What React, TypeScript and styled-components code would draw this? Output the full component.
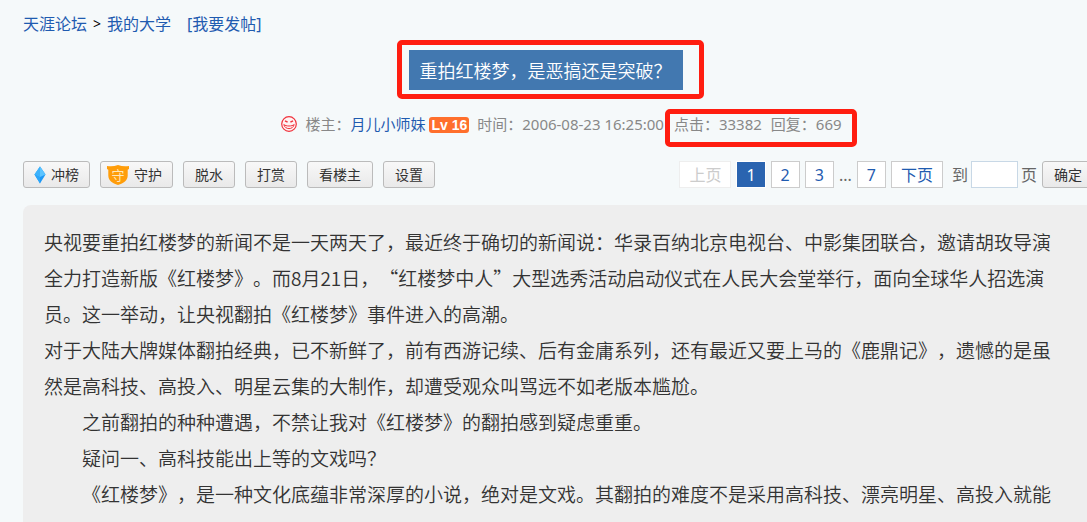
import React from "react";
import styled, { createGlobalStyle, css } from "styled-components";

const sans = `"Noto Sans", "Noto Sans CJK SC", sans-serif`;
const cjk = `"Noto Sans CJK SC", "Noto Sans", sans-serif`;

const GlobalStyle = createGlobalStyle`
  * { box-sizing: border-box; }
  body {
    margin: 0;
    background: #f5f9fa;
    color: #333;
    font-family: ${sans};
    overflow-x: hidden;
    text-spacing-trim: space-all;
  }
  button, input { font-family: inherit; margin: 0; }
`;

const Page = styled.main`
  margin: 0 -13px 0 23px;
  padding-top: 10px;
`;

const Link = styled.a`
  color: #1f5bb0;
  text-decoration: none;
`;

const Breadcrumb = styled.nav`
  display: flex;
  align-items: center;
  height: 26px;
  font-size: 16px;
  white-space: nowrap;
  color: #000;
`;

const Separator = styled.span`
  width: 20px;
  text-align: center;
  font-size: 14px;
`;

const PostLink = styled(Link)`
  margin-left: 16px;
`;

const TitleRow = styled.div`
  display: flex;
  justify-content: center;
  margin-top: 14px;
  padding-right: 32px;
`;

const TitleFrame = styled.div`
  position: relative;
`;

const Title = styled.h1`
  margin: 0;
  padding: 0 11px;
  background: #4278b0;
  color: #fff;
  font-family: ${cjk};
  font-size: 18px;
  font-weight: 350;
  line-height: 40px;
  white-space: nowrap;
`;

const Highlight = styled.span<{ $inset: string }>`
  position: absolute;
  inset: ${(p) => p.$inset};
  border: 5px solid #ff1d10;
  border-radius: 5px;
  pointer-events: none;
`;

const Meta = styled.div`
  display: flex;
  justify-content: center;
  align-items: baseline;
  margin-top: 20px;
  font-size: 15px;
  line-height: 28px;
  color: #888;
  white-space: nowrap;
`;

const Smile = styled.svg`
  align-self: center;
  width: 16px;
  height: 16px;
  margin-right: 8px;
`;

const Level = styled.span`
  margin: 0 8px 0 4px;
  padding: 0 2px;
  border-radius: 3px;
  background: #ff6f2c;
  color: #fff;
  font: bold 14px/16px "Liberation Sans", sans-serif;
`;

const Stats = styled.span`
  position: relative;
  display: flex;
  gap: 9px;
  margin-left: 10px;
`;

const Toolbar = styled.div`
  display: flex;
  justify-content: space-between;
  align-items: center;
  margin-top: 23px;
  padding-right: 6px;
`;

const Actions = styled.div`
  display: flex;
  gap: 10px;
`;

const Button = styled.button<{ $icon?: boolean }>`
  display: flex;
  align-items: center;
  gap: 4px;
  height: 27px;
  padding: 0 ${(p) => (p.$icon ? 10 : 11)}px 0 ${(p) => (p.$icon ? 5 : 11)}px;
  border: 1px solid #bbb;
  border-radius: 3px;
  background: linear-gradient(#f8f8f8, #e9e9e9);
  color: #333;
  font-size: 14px;
  line-height: 24px;
  white-space: nowrap;
`;

const ButtonIcon = styled.svg<{ $width: number }>`
  width: ${(p) => p.$width}px;
  height: 22px;
  flex: none;
`;

const Pager = styled.form`
  display: flex;
  align-items: center;
  gap: 5px;
  font-size: 16px;
  color: #666;
  white-space: nowrap;
`;

const pageBox = css`
  height: 27px;
  padding: 0 9px;
  border: 1px solid #ccc;
  background: #fff;
  line-height: 26px;
`;

const PageLink = styled(Link)`
  ${pageBox}
`;

const PagePrev = styled.span`
  ${pageBox}
  border-color: #eee;
  color: #ccc;
`;

const PageCurrent = styled.strong`
  ${pageBox}
  border-color: #fff;
  background: #2a64b0;
  color: #fff;
  font-weight: 400;
`;

const Jump = styled.label`
  display: flex;
  align-items: center;
  gap: 3px;
  margin-left: 4px;
  line-height: 24px;
`;

const JumpInput = styled.input`
  width: 47px;
  height: 27px;
  padding: 0 4px;
  border: 1px solid #c8d8e6;
  background: #fff;
  font-size: 16px;
`;

const Article = styled.article`
  margin-top: 17px;
  padding: 19px 41px 10px 21px;
  border-radius: 8px 8px 0 0;
  background: #eee;
  font-family: ${cjk};
  font-size: 19px;
  font-weight: 350;
  line-height: 36px;
`;

const Paragraph = styled.p<{ $indent?: boolean }>`
  margin: 0;
  text-indent: ${(p) => (p.$indent ? "2em" : "0")};
`;

const SmileIcon = () => (
  <Smile viewBox="0 0 16 16" fill="none" stroke="#f0323c" aria-hidden="true">
    <circle cx="8" cy="8" r="7.3" fill="#fff3f3" strokeWidth="1.2" />
    <path d="M4 4.800 6.600 6.200M12 4.800 9.400 6.200" strokeWidth="1.500" />
    <path d="M2.800 8.500C5 10.500 11 10.500 13.200 8.500C12 14 4 14 2.800 8.500Z" strokeWidth="1" />
  </Smile>
);

const DiamondIcon = () => (
  <ButtonIcon $width={18} viewBox="0 0 18 22" aria-hidden="true">
    <path d="M11 2.500 16.500 10.500 11 19.500 5.500 10.500Z" fill="#1e98f5" />
    <path d="M11 2.500 16.500 10.500 11 13 5.500 10.500Z" fill="#5cc4ff" />
    <path d="M11 2.500V13L5.500 10.500Z" fill="#3db2fb" />
    <path d="M11 13V19.500L5.500 10.500Z" fill="#2ba6fa" />
  </ButtonIcon>
);

const ShieldIcon = () => (
  <ButtonIcon $width={24} viewBox="0 0 24 22" aria-hidden="true">
    <path d="M1 2c4 .6 7.500.3 11-1 3.500 1.300 7 1.600 11 1v3l-1.300.8v5.700c0 5-4 7.500-9.700 9.500-5.700-2-9.700-4.500-9.700-9.500V5.800L1 5Z" fill="#ff9d0a" />
    <text x="12" y="16" textAnchor="middle" fontSize="13" fill="#ffe9bd">守</text>
  </ButtonIcon>
);

const pages = ["2", "3"];

const paragraphs = [
  { indent: false, text: "央视要重拍红楼梦的新闻不是一天两天了，最近终于确切的新闻说：华录百纳北京电视台、中影集团联合，邀请胡玫导演全力打造新版《红楼梦》。而8月21日，“红楼梦中人”大型选秀活动启动仪式在人民大会堂举行，面向全球华人招选演员。这一举动，让央视翻拍《红楼梦》事件进入的高潮。" },
  { indent: false, text: "对于大陆大牌媒体翻拍经典，已不新鲜了，前有西游记续、后有金庸系列，还有最近又要上马的《鹿鼎记》，遗憾的是虽然是高科技、高投入、明星云集的大制作，却遭受观众叫骂远不如老版本尴尬。" },
  { indent: true, text: "之前翻拍的种种遭遇，不禁让我对《红楼梦》的翻拍感到疑虑重重。" },
  { indent: true, text: "疑问一、高科技能出上等的文戏吗？" },
  { indent: true, text: "《红楼梦》，是一种文化底蕴非常深厚的小说，绝对是文戏。其翻拍的难度不是采用高科技、漂亮明星、高投入就能" },
];

export default function App() {
  return (
    <Page lang="zh-CN">
      <GlobalStyle />
      <Breadcrumb>
        <Link href="#forum">天涯论坛</Link>
        <Separator>&gt;</Separator>
        <Link href="#university">我的大学</Link>
        <PostLink href="#post">[我要发帖]</PostLink>
      </Breadcrumb>

      <TitleRow>
        <TitleFrame>
          <Title>重拍红楼梦，是恶搞还是突破？</Title>
          <Highlight $inset="-10px -21px -9px -12px" />
        </TitleFrame>
      </TitleRow>

      <Meta>
        <SmileIcon />
        <span>楼主：</span>
        <Link href="#author">月儿小师妹</Link>
        <Level>Lv 16</Level>
        <span>时间：2006-08-23 16:25:00</span>
        <Stats>
          <span>点击：33382</span>
          <span>回复：669</span>
          <Highlight $inset="-1px -15px -9px -9px" />
        </Stats>
      </Meta>

      <Toolbar>
        <Actions>
          <Button type="button" $icon><DiamondIcon />冲榜</Button>
          <Button type="button" $icon><ShieldIcon />守护</Button>
          <Button type="button">脱水</Button>
          <Button type="button">打赏</Button>
          <Button type="button">看楼主</Button>
          <Button type="button">设置</Button>
        </Actions>
        <Pager onSubmit={(e) => e.preventDefault()}>
          <PagePrev>上页</PagePrev>
          <PageCurrent>1</PageCurrent>
          {pages.map((n) => (
            <PageLink key={n} href={`#page-${n}`}>{n}</PageLink>
          ))}
          <span>...</span>
          <PageLink href="#page-7">7</PageLink>
          <PageLink href="#next">下页</PageLink>
          <Jump>
            到
            <JumpInput type="text" />
            页
          </Jump>
          <Button type="submit">确定</Button>
        </Pager>
      </Toolbar>

      <Article>
        {paragraphs.map((p) => (
          <Paragraph key={p.text} $indent={p.indent}>{p.text}</Paragraph>
        ))}
      </Article>
    </Page>
  );
}
